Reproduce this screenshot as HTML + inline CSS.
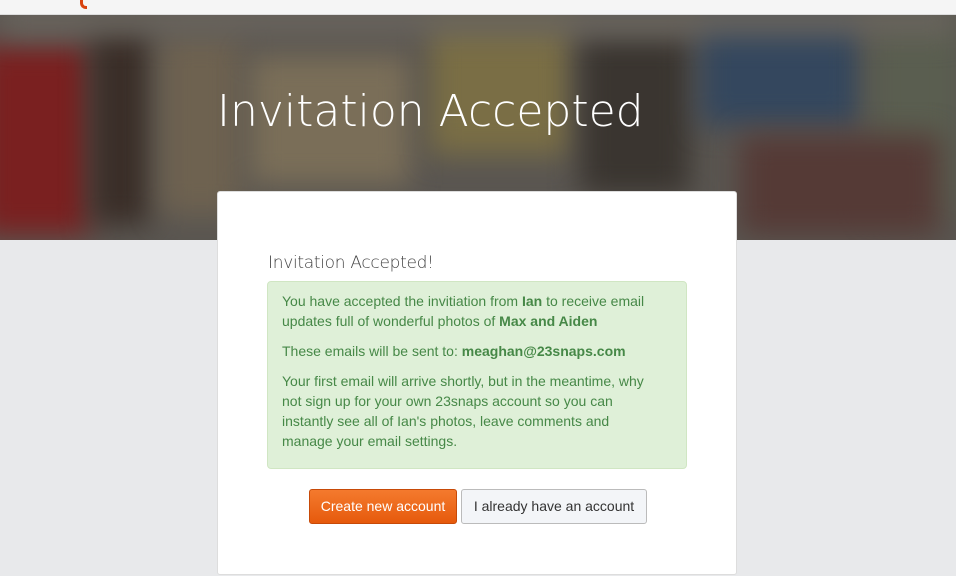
<!DOCTYPE html>
<html><head><meta charset="utf-8"><style>
*{margin:0;padding:0;box-sizing:border-box}
body{width:956px;height:576px;overflow:hidden;background:#e8e9eb;font-family:"Liberation Sans",sans-serif;position:relative}
.top{position:absolute;left:0;top:0;width:956px;height:15px;background:#f5f5f5;border-bottom:1px solid #ddd;z-index:3}
.logo{position:absolute;left:80px;top:0;width:7px;height:9px;border-left:3px solid #d9430f;border-bottom:3px solid #d9430f;border-radius:0 0 0 6px}
.banner{position:absolute;left:0;top:15px;width:956px;height:225px;background:#5a5651;overflow:hidden}
.bl{position:absolute;filter:blur(14px)}
h1{position:absolute;left:217px;top:86px;font-family:"DejaVu Sans","Liberation Sans",sans-serif;font-weight:200;font-size:44px;color:#fff;letter-spacing:0;z-index:2}
.card{position:absolute;left:217px;top:191px;width:520px;height:384px;background:#fff;border:1px solid #ddd;border-radius:3px;z-index:2}
h2{position:absolute;left:50px;top:61px;font-family:"DejaVu Sans","Liberation Sans",sans-serif;font-weight:300;font-size:17px;color:#444;letter-spacing:-0.3px}
.alert{position:absolute;left:49px;top:89px;width:420px;height:188px;background:#dff0d8;border:1px solid #d0e6c3;border-radius:4px;padding:9px 34px 9px 14px;color:#468847;font-size:14px;line-height:20px}
.alert p{margin-bottom:10px}
.btn{position:absolute;top:297px;height:35px;font-size:14px;line-height:33px;text-align:center;border-radius:3px}
.b1{left:91px;width:148px;background:linear-gradient(#f47a2e,#e65a0c);color:#fff;border:1px solid #c74a08}
.b2{left:243px;width:186px;background:#f3f5f8;color:#333;border:1px solid #bbb}
</style></head><body>
<div class="top"><div class="logo"></div></div>
<div class="banner">
<div class="bl" style="left:-20px;top:30px;width:110px;height:190px;background:#7a2020"></div>
<div class="bl" style="left:90px;top:10px;width:60px;height:200px;background:#3a2e28"></div>
<div class="bl" style="left:160px;top:20px;width:80px;height:180px;background:#6e6250"></div>
<div class="bl" style="left:250px;top:40px;width:160px;height:130px;background:#7a6e58"></div>
<div class="bl" style="left:430px;top:0px;width:140px;height:140px;background:#7a6e45"></div>
<div class="bl" style="left:580px;top:20px;width:110px;height:160px;background:#3a3530"></div>
<div class="bl" style="left:700px;top:0px;width:160px;height:110px;background:#34475e"></div>
<div class="bl" style="left:870px;top:0px;width:90px;height:200px;background:#5a5e50"></div>
<div class="bl" style="left:740px;top:120px;width:200px;height:100px;background:#553a36"></div>
<div class="bl" style="left:0;top:-10px;width:956px;height:30px;background:#6a655e"></div>
</div>
<h1>Invitation Accepted</h1>
<div class="card">
<h2>Invitation Accepted!</h2>
<div class="alert">
<p>You have accepted the invitiation from <b>Ian</b> to receive email updates full of wonderful photos of <b>Max and Aiden</b></p>
<p>These emails will be sent to: <b>meaghan@23snaps.com</b></p>
<p>Your first email will arrive shortly, but in the meantime, why not sign up for your own 23snaps account so you can instantly see all of Ian's photos, leave comments and manage your email settings.</p>
</div>
<div class="btn b1">Create new account</div>
<div class="btn b2">I already have an account</div>
</div>
</body></html>
